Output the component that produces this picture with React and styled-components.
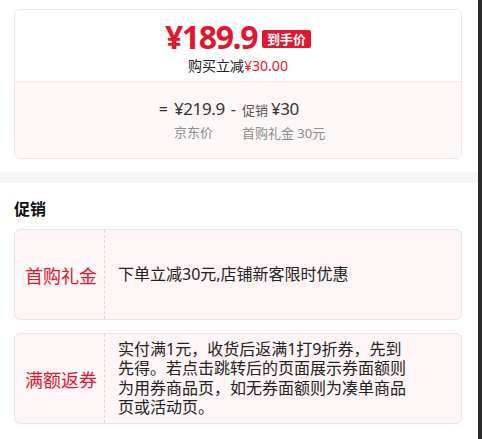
import React from "react";
import styled, { createGlobalStyle } from "styled-components";

const Global = createGlobalStyle`
  html, body { margin: 0; padding: 0; background: #fff; }
  body { font-family: "Noto Sans", "Noto Sans CJK SC", sans-serif; color: #1a1a1a; }
`;

const RED = "#e3152f";

const Shell = styled.div`
  display: flex;
  min-height: 100vh;
  width: 482px;
`;

const Main = styled.div`
  flex: 1;
  display: flex;
  flex-direction: column;
`;

const Scrollbar = styled.div`
  width: 4px;
  background: #2b2b2b;
`;

const Top = styled.div`
  padding: 9px 16px 13px 14px;
`;

const PriceCard = styled.div`
  border: 1px solid #f3e3e5;
  border-radius: 6px;
  overflow: hidden;
`;

const PriceHead = styled.div`
  height: 71px;
  display: flex;
  flex-direction: column;
  align-items: center;
  background: #fff;
  border-bottom: 1px solid #f6e9ea;
`;

const PriceLine = styled.div`
  display: flex;
  align-items: center;
  gap: 5px;
  margin-top: 8px;
  height: 38px;
`;

const BigPrice = styled.div`
  font-family: "Noto Sans", sans-serif;
  font-weight: 700;
  font-size: 32px;
  letter-spacing: -1.4px;
  color: ${RED};
  line-height: 34px;
`;

const Badge = styled.span`
  background: ${RED};
  color: #fff;
  font-size: 13px;
  font-weight: 700;
  line-height: 16px;
  padding: 1px 5px;
  border-radius: 2px;
  margin-top: 4px;
`;

const Saved = styled.div`
  font-size: 14px;
  line-height: 18px;
  color: #222;
  margin-top: 1px;
  span { color: ${RED}; }
`;

const PriceBody = styled.div`
  height: 76px;
  background: #fef7f7;
  display: flex;
  justify-content: center;
  align-items: flex-start;
  padding-top: 15px;
  padding-left: 8px;
  box-sizing: border-box;
  gap: 6px;
`;

const Op = styled.span`
  font-size: 16px;
  line-height: 24px;
  color: #333;
`;

const Col = styled.div`
  display: flex;
  flex-direction: column;
`;

const Amount = styled.div`
  font-size: 17px;
  letter-spacing: -0.4px;
  line-height: 24px;
  color: #333;
  small { font-size: 13px; color: #555; margin-right: 3px; letter-spacing: 0; }
`;

const Caption = styled.div`
  font-size: 13px;
  line-height: 20px;
  color: #8c8c8c;
  margin-top: 1px;
`;

const Band = styled.div`
  height: 11px;
  background: #f5f6fa;
`;

const Section = styled.div`
  padding: 16px 16px 0 14px;
  display: flex;
  flex-direction: column;
`;

const Title = styled.div`
  font-size: 16px;
  font-weight: 700;
  line-height: 20px;
  color: #111;
  margin-bottom: 10px;
`;

const Promo = styled.div`
  display: flex;
  min-height: 91px;
  border: 1px solid #f3dfe2;
  border-radius: 6px;
  background: #fdf5f6;
  box-sizing: border-box;
  margin-bottom: 13px;
`;

const Label = styled.div`
  width: 90px;
  flex: none;
  display: flex;
  align-items: center;
  justify-content: center;
  font-size: 18px;
  color: ${RED};
  border-right: 1px dashed #ebd0d5;
  padding-left: 3px;
  box-sizing: border-box;
`;

const Desc = styled.div`
  display: flex;
  align-items: center;
  padding: 4px 0 4px 13px;
  font-size: 16px;
  line-height: 19.5px;
  color: #222;
  max-width: 292px;
`;

export default function App() {
  return (
    <>
      <Global />
      <Shell>
        <Main>
          <Top>
            <PriceCard>
              <PriceHead>
                <PriceLine>
                  <BigPrice>¥189.9</BigPrice>
                  <Badge>到手价</Badge>
                </PriceLine>
                <Saved>
                  购买立减<span>¥30.00</span>
                </Saved>
              </PriceHead>
              <PriceBody>
                <Op>=</Op>
                <Col>
                  <Amount>¥219.9</Amount>
                  <Caption>京东价</Caption>
                </Col>
                <Op>-</Op>
                <Col>
                  <Amount>
                    <small>促销</small>¥30
                  </Amount>
                  <Caption>首购礼金 30元</Caption>
                </Col>
              </PriceBody>
            </PriceCard>
          </Top>
          <Band />
          <Section>
            <Title>促销</Title>
            <Promo>
              <Label>首购礼金</Label>
              <Desc>下单立减30元,店铺新客限时优惠</Desc>
            </Promo>
            <Promo>
              <Label>满额返券</Label>
              <Desc>
                实付满1元，收货后返满1打9折券，先到先得。若点击跳转后的页面展示券面额则为用券商品页，如无券面额则为凑单商品页或活动页。
              </Desc>
            </Promo>
          </Section>
        </Main>
        <Scrollbar />
      </Shell>
    </>
  );
}
